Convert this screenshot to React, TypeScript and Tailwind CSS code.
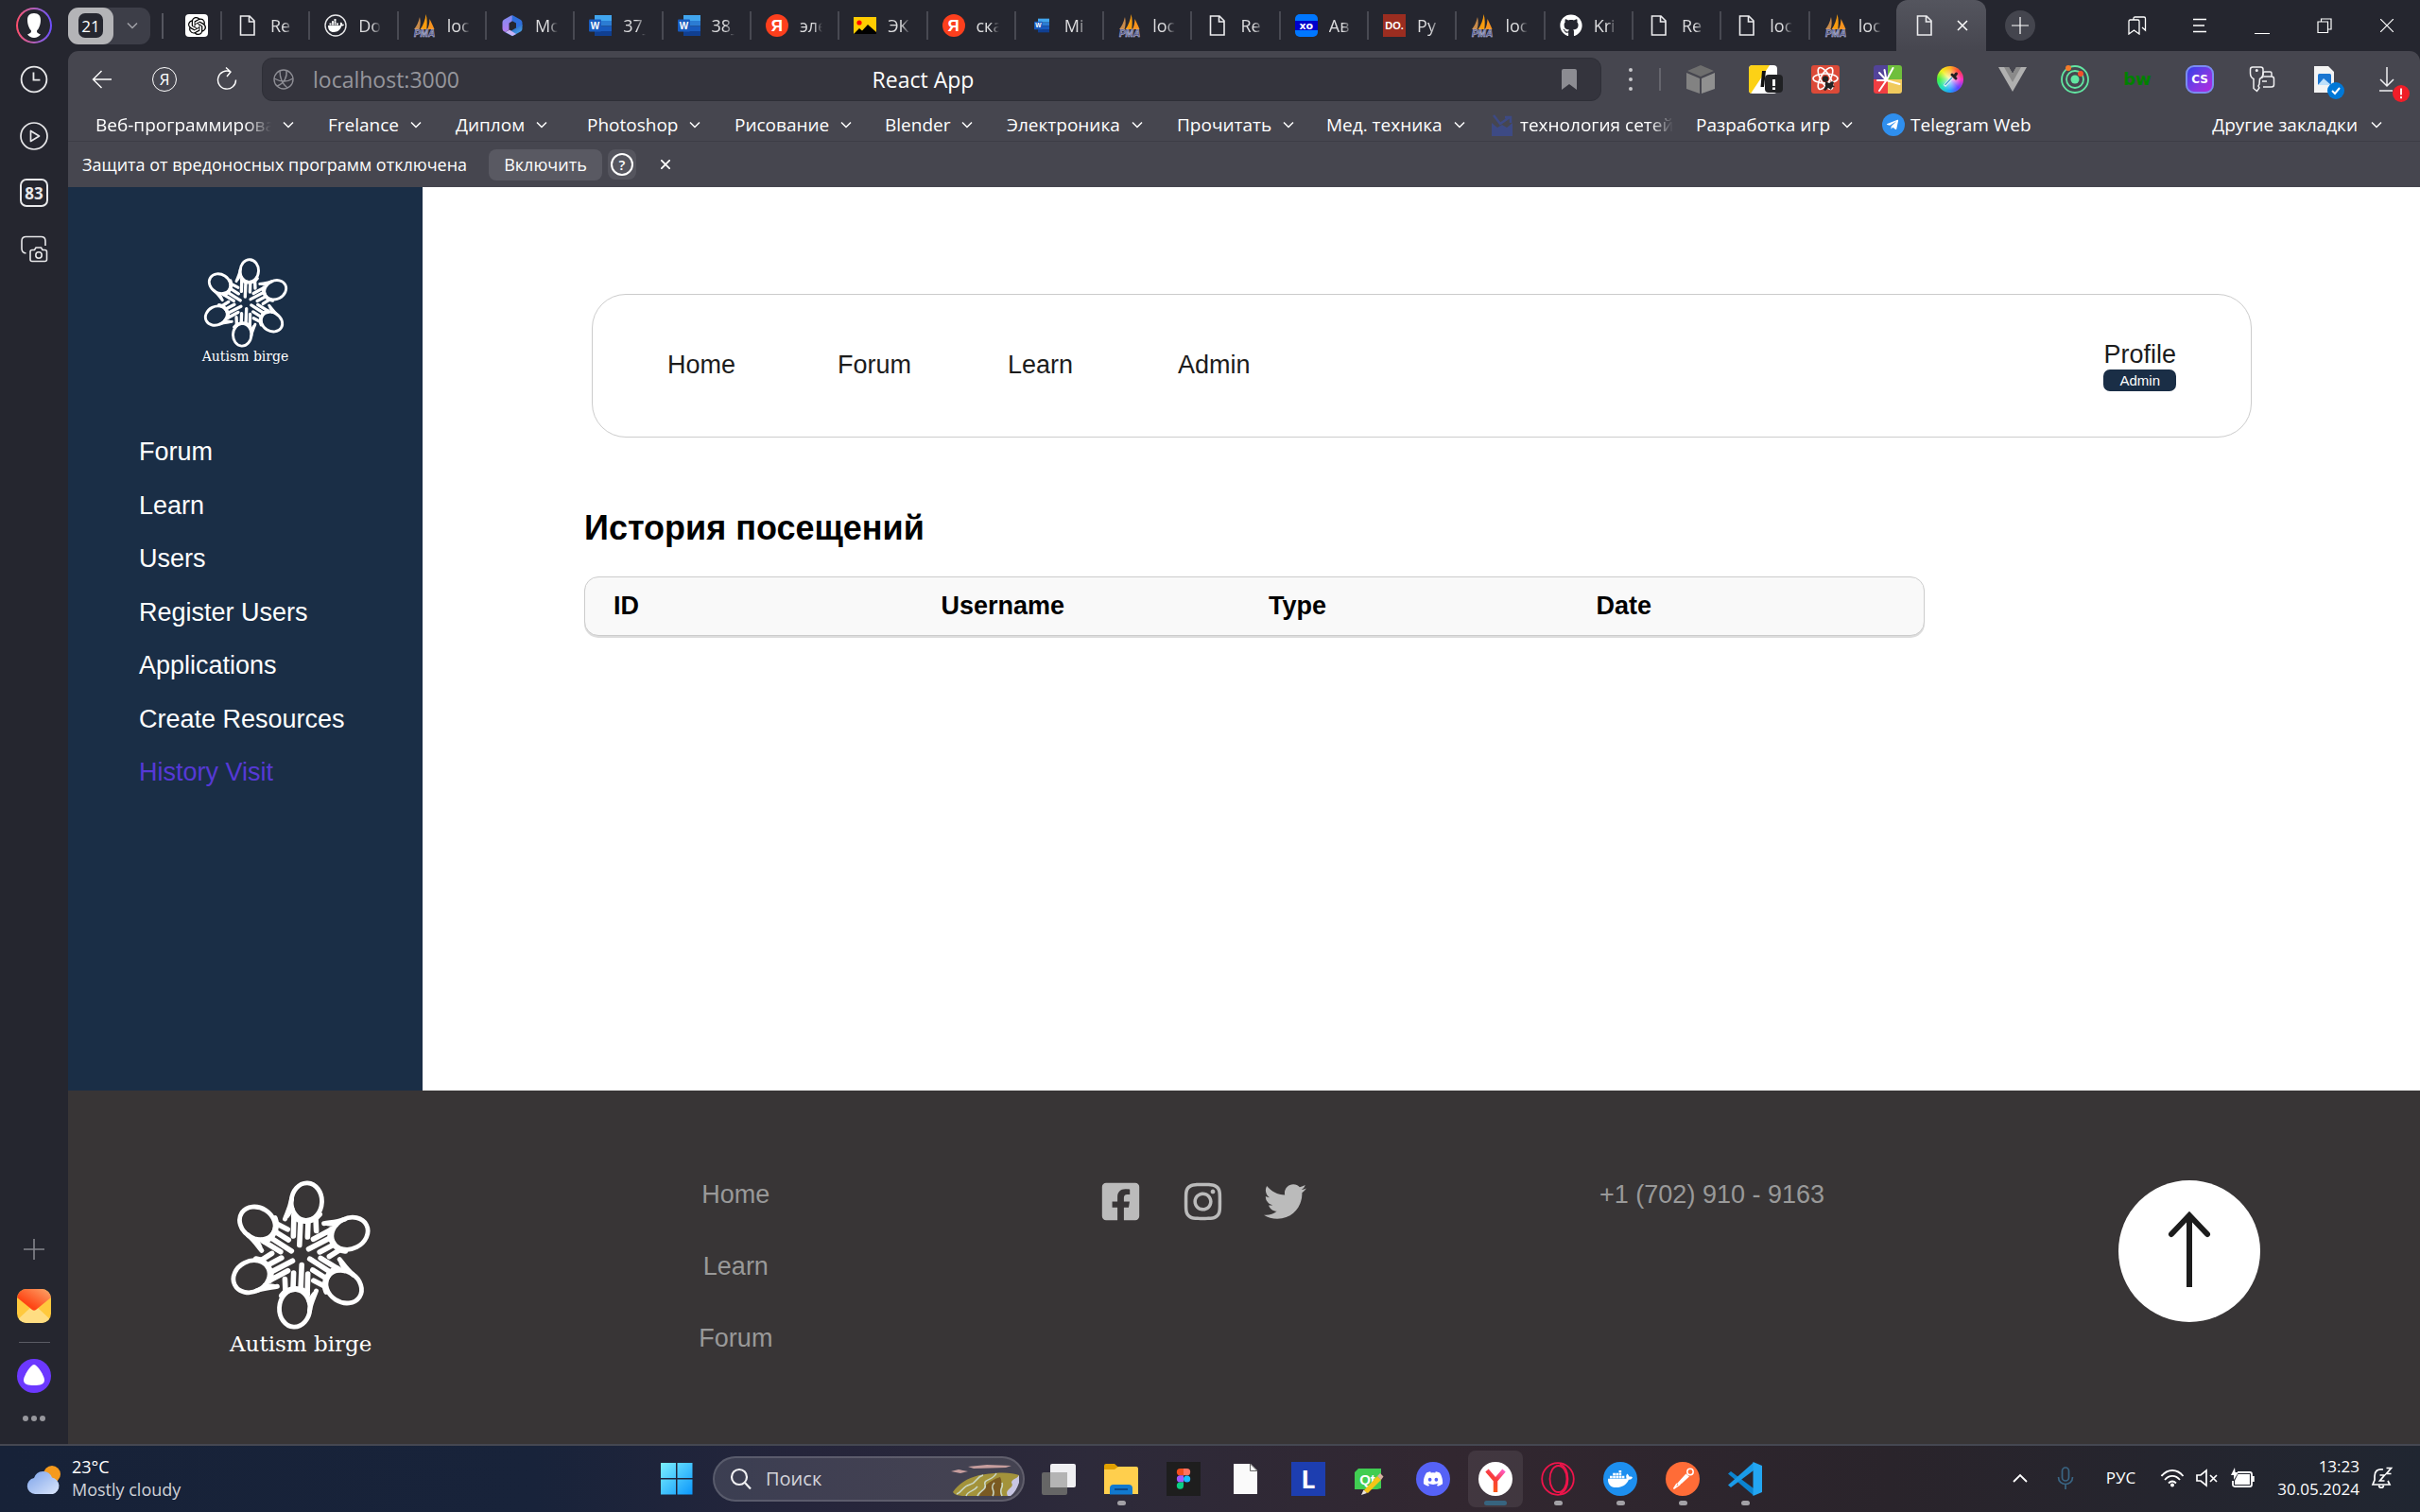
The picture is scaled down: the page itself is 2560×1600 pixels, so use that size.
import React from "react";
import {
  FaDocker,
  FaFacebookSquare,
  FaGithub,
  FaInstagram,
  FaTelegramPlane,
  FaTwitter,
  FaDiscord,
} from "react-icons/fa";
import { SiOpenai } from "react-icons/si";

/* ---------- shared pieces ---------- */

function Chevron({ className = "" }: { className?: string }) {
  return (
    <svg viewBox="0 0 12 8" className={`h-2 w-3 shrink-0 ${className}`} fill="none" stroke="currentColor" strokeWidth="1.5">
      <path d="M1 1.5 6 6.5 11 1.5" />
    </svg>
  );
}

function Hand({ angle }: { angle: number }) {
  return (
    <g transform={`rotate(${angle} 75 79)`}>
      <ellipse cx="81.3" cy="22.6" rx="16.2" ry="19.8" strokeWidth="4.8" transform="rotate(3 81.3 22.6)" />
      <path d="M65.5 20 C64 29 61 34 58.5 41" strokeWidth="5" />
      <path d="M66.5 30 61 38" strokeWidth="4" />
      <path d="M68 36 67.3 59" />
      <path d="M75 42 73.800 68.500" />
      <path d="M83 43 82.400 60" />
      <path d="M91 40 91.600 53.500" />
      <path d="M68 38 C74 45 88 45 95 36" strokeWidth="6" />
    </g>
  );
}

function Logo({ large = false }: { large?: boolean }) {
  return (
    <a href="#home" className="flex flex-col items-center text-white" aria-label="Autism birge">
      <svg viewBox="0 0 150 160" className={large ? "h-[160px] w-[150px]" : "h-24 w-[90px]"} fill="none" stroke="white" strokeWidth="5.600" strokeLinecap="round">
        {[0, 60, 120, 180, 240, 300].map((a) => (
          <Hand key={a} angle={a} />
        ))}
      </svg>
      <span
        className={
          large
            ? "whitespace-nowrap font-['DejaVu_Serif',serif] text-[23px] leading-[27px]"
            : "whitespace-nowrap font-['DejaVu_Serif',serif] text-[14px] leading-4"
        }
      >
        Autism birge
      </span>
    </a>
  );
}

/* ---------- tab icons ---------- */

const FileIcon = () => (
  <svg viewBox="0 0 24 24" className="size-6" fill="none" stroke="#ececee" strokeWidth="1.6">
    <path d="M4.5 2h9.5l5 5v15H4.5zM13.5 2v6h5.5" />
  </svg>
);
const DockerTab = () => (
  <svg viewBox="0 0 24 24" className="size-6">
    <circle cx="12" cy="12" r="11" fill="none" stroke="#e6e6e8" strokeWidth="1.4" />
    <g fill="#fff">
      <path d="M4 12h12.600c.5-1 .4-1.800.1-2.500l1.200-1c.9.7 1.200 1.500 1.200 2.200.8-.1 1.500 0 2 .3-.6 1.200-1.700 1.600-2.800 1.600C17 16.500 14.500 19 10 19c-4 0-6-2.500-6-7z" />
      <path d="M5.500 9.500h2v2h-2zM8 9.500h2v2H8zM10.500 9.500h2v2h-2zM13 9.500h2v2h-2zM8 7.200h2v2H8zM10.500 7.200h2v2h-2zM10.500 5h2v2h-2z" />
    </g>
  </svg>
);
const PmaTab = () => (
  <svg viewBox="0 0 24 24" className="size-6 overflow-visible">
    <path d="M7 3C5.500 9 3.500 13 1 16h5.500C8 12 8 7 7 3z" fill="#c98b4a" />
    <path d="M13.500 0C13 6 10.500 12 7.500 16h6.800C15 10 15 5 13.500 0z" fill="#f89c0e" />
    <path d="M17.500 5c-.2 5-1 8-2.500 11h7.500C21 12 19 8 17.500 5z" fill="#f7931e" />
    <text x="12" y="23.500" textAnchor="middle" className="font-['Liberation_Sans',sans-serif] text-[10px] font-bold italic" fill="#44487c" stroke="#c4c6e2" strokeWidth="0.5">PMA</text>
  </svg>
);
const CopilotTab = () => (
  <svg viewBox="0 0 24 24" className="size-6">
    <defs>
      <linearGradient id="m365a" x1="0" y1="0" x2="0" y2="1"><stop stopColor="#7c8cf0" /><stop offset="1" stopColor="#b67cf0" /></linearGradient>
      <linearGradient id="m365b" x1="0" y1="0" x2="1" y2="1"><stop stopColor="#0f3fae" /><stop offset="1" stopColor="#58b8f4" /></linearGradient>
    </defs>
    <path d="M11.500 1 3.500 5.500C2 6.500 1.500 7.500 1.500 9v6c0 2 .8 3 3 4l4-2.500V9.500L13 6.500z" fill="url(#m365a)" />
    <path d="m12 1 8.500 4.800C22 6.700 22.500 8 22.500 9.500v3L16 15V9.500L11.500 7z" fill="#2f6fdc" />
    <path d="M4 19l8 4.200 9-5c1.200-.9 1.500-2 1.500-3.500V11L16 14.500 10 18z" fill="url(#m365b)" />
    <path d="M4.500 19 12 23l4-2-7-4.500z" fill="#c9b4f6" />
  </svg>
);
const WordTab = ({ small = false }: { small?: boolean }) => (
  <svg viewBox="0 0 24 24" className={small ? "mx-1 size-4" : "size-6"}>
    <path d="M6 1h18v6H6z" fill="#41a5ee" />
    <path d="M6 7h18v5.500H6z" fill="#2b7cd3" />
    <path d="M6 12.500h18V18H6z" fill="#185abd" />
    <path d="M6 18h18v5H6z" fill="#103f91" />
    <rect y="5.500" width="13" height="13" rx="1" fill="#185abd" />
    <text x="6.500" y="15.500" textAnchor="middle" className="font-['Liberation_Sans',sans-serif] text-[10px] font-bold" fill="#fff">W</text>
  </svg>
);
const YaTab = () => (
  <span className="flex size-6 items-center justify-center rounded-full bg-[#fc3f1d] font-['Liberation_Sans',sans-serif] text-[17px] leading-none font-bold text-white">Я</span>
);
const PictureTab = () => (
  <svg viewBox="0 0 24 24" className="size-6">
    <path d="M0 3h24v18H0z" fill="#ffcc00" />
    <circle cx="6" cy="9" r="2.600" fill="#f00" />
    <path d="M0 21l6-6 3 2.500L15 11l9 8v2z" fill="#000" />
  </svg>
);
const XoTab = () => (
  <span className="flex size-6 items-center justify-center overflow-hidden rounded-[5px] bg-[linear-gradient(#0077ff_28%,#00c_28%,#00c_72%,#0077ff_72%)] font-['DejaVu_Sans',sans-serif] text-[11px] leading-none font-bold text-white">xo</span>
);
const DoTab = () => (
  <span className="flex size-6 items-center justify-center bg-[#9b2d20] font-['Liberation_Sans',sans-serif] text-[11px] leading-none font-bold text-white">DO.</span>
);
const GithubTab = () => <FaGithub className="size-6 text-white" />;

const tabs: { icon: () => React.ReactElement; text: string }[] = [
  { icon: FileIcon, text: "Re" },
  { icon: DockerTab, text: "Do" },
  { icon: PmaTab, text: "loc" },
  { icon: CopilotTab, text: "Mc" },
  { icon: WordTab, text: "37_" },
  { icon: WordTab, text: "38_" },
  { icon: YaTab, text: "эле" },
  { icon: PictureTab, text: "ЭК" },
  { icon: YaTab, text: "ска" },
  { icon: () => <WordTab small />, text: "Mi" },
  { icon: PmaTab, text: "loc" },
  { icon: FileIcon, text: "Re" },
  { icon: XoTab, text: "Ав" },
  { icon: DoTab, text: "Py" },
  { icon: PmaTab, text: "loc" },
  { icon: GithubTab, text: "Kri" },
  { icon: FileIcon, text: "Re" },
  { icon: FileIcon, text: "loc" },
  { icon: PmaTab, text: "loc" },
];

/* ---------- browser chrome ---------- */

function CellButton({ label, children }: { label: string; children: React.ReactNode }) {
  return (
    <button aria-label={label} className="flex w-[66px] shrink-0 items-center justify-center text-white">
      {children}
    </button>
  );
}

function TabStrip() {
  return (
    <div className="flex h-[54px] items-stretch">
      <div className="flex w-[99px] items-center">
        <button aria-label="Группы вкладок" className="flex h-[39px] w-[87px] items-center rounded-[11px] bg-[#3d3e48]">
          <span className="flex h-[39px] w-12 items-center justify-center rounded-[11px] bg-[#b4b4b7]">
            <span className="flex h-[26px] w-[26px] items-center justify-center rounded-[7px] bg-[#25262f] text-[17px] leading-none text-white">21</span>
          </span>
          <Chevron className="ml-3.5 text-[#a3a3a9]" />
        </button>
      </div>
      <div className="my-auto h-[27px] w-0.5 bg-[#55565f]" />
      <div className="flex w-[60px] items-center justify-center pl-2.5">
        <span className="flex size-6 items-center justify-center rounded bg-white text-black">
          <SiOpenai className="size-[19px]" />
        </span>
      </div>
      <div className="flex min-w-0 flex-1 items-center">
        {tabs.map((t, i) => (
          <button key={i} className="flex h-[30px] min-w-0 flex-1 items-center border-l-2 border-[#484952] pl-[15px] text-[#dcdcde]">
            <span className="flex w-6 shrink-0 justify-center"><t.icon /></span>
            <span className="ml-3 w-6 overflow-hidden text-left text-[18px] leading-6 whitespace-nowrap [mask-image:linear-gradient(to_right,#000_60%,transparent)]">
              {t.text}
            </span>
          </button>
        ))}
      </div>
      <div className="flex w-[95px] items-center rounded-t-xl bg-linear-to-b from-[#54555e] to-[#46464f] pl-[18px]">
        <FileIcon />
        <button aria-label="Закрыть вкладку" className="ml-[22px] text-white">
          <svg viewBox="0 0 12 12" className="size-3" stroke="currentColor" strokeWidth="1.5"><path d="M1 1l10 10M11 1 1 11" /></svg>
        </button>
      </div>
      <div className="flex w-[127px] items-center pl-5">
        <button aria-label="Новая вкладка" className="flex size-8 items-center justify-center rounded-full bg-[#44454e] text-white">
          <svg viewBox="0 0 18 18" className="size-[18px]" stroke="currentColor" strokeWidth="1.2"><path d="M9 0v18M0 9h18" /></svg>
        </button>
      </div>
      <CellButton label="Закладки">
        <svg viewBox="0 0 20 20" className="size-5" fill="none" stroke="currentColor" strokeWidth="1.3"><path d="M1 5.500C1 4.500 1.500 4 2.500 4h8c1 0 1.500.5 1.500 1.500V19l-5.500-4L1 19zM6 4V2.500C6 1.500 6.500 1 7.500 1h9.500c1 0 1.500.5 1.500 1.500V15l-3.500-3" /></svg>
      </CellButton>
      <CellButton label="Меню">
        <svg viewBox="0 0 16 16" className="size-4" stroke="currentColor" strokeWidth="1.3"><path d="M1 1.500h14M1 8h12M1 14.500h14" /></svg>
      </CellButton>
      <CellButton label="Свернуть">
        <span className="mt-4 h-px w-4 bg-white" />
      </CellButton>
      <CellButton label="Развернуть">
        <svg viewBox="0 0 16 16" className="size-4" fill="none" stroke="currentColor" strokeWidth="1.2"><path d="M1 4h10.500v11.500H1zM4.500 4V1H15v11h-3.500" /></svg>
      </CellButton>
      <CellButton label="Закрыть">
        <svg viewBox="0 0 14 14" className="size-3.5" stroke="currentColor" strokeWidth="1.2"><path d="M0 0l14 14M14 0 0 14" /></svg>
      </CellButton>
      <div className="w-0.5" />
    </div>
  );
}

const extensions: { label: string; icon: React.ReactElement }[] = [
  {
    label: "Куб",
    icon: (
      <svg viewBox="0 0 30 30" className="size-[30px]">
        <path d="M15 0 29 6 15 12 1 6z" fill="#6e6e6e" />
        <path d="M0 8l14 6v16L0 25z" fill="#828282" />
        <path d="M30 8l-14 6v16l14-5z" fill="#909090" />
      </svg>
    ),
  },
  {
    label: "Предупреждение",
    icon: (
      <svg viewBox="0 0 36 30" className="ml-1.5 h-[30px] w-9">
        <rect width="30" height="30" rx="4" fill="#fff" />
        <path d="M4 0h18L2 30a4 4 0 0 1-2-4V4a4 4 0 0 1 4-4z" fill="#fcd116" />
        <path d="M14 6h4l-2 17h-3.500z" fill="#111" />
        <rect x="17" y="10" width="19" height="19" rx="4" fill="#202124" />
        <path d="M26.500 15v7" stroke="#fff" strokeWidth="3" />
        <path d="M26.500 23.500v2.500" stroke="#fff" strokeWidth="3" />
      </svg>
    ),
  },
  {
    label: "React",
    icon: (
      <svg viewBox="0 0 30 30" className="size-[30px]">
        <rect width="30" height="30" rx="3" fill="#dc4a38" />
        <g fill="none" stroke="#fff" strokeWidth="1.600">
          <ellipse cx="15" cy="14" rx="13" ry="5" />
          <ellipse cx="15" cy="14" rx="13" ry="5" transform="rotate(60 15 14)" />
          <ellipse cx="15" cy="14" rx="13" ry="5" transform="rotate(120 15 14)" />
        </g>
        <circle cx="15" cy="14.500" r="3.200" fill="#222" />
        <path d="M15 17l4 2 3-2 2 1-1 3 2 2-3 .5-1 2.500-3-2-3 3-2-1 2-4z" fill="#222" />
      </svg>
    ),
  },
  {
    label: "Цвета",
    icon: (
      <svg viewBox="0 0 30 30" className="size-[30px]">
        <path d="M0 3a3 3 0 0 1 3-3h12v15H0z" fill="#524399" />
        <path d="M15 0h12a3 3 0 0 1 3 3v12H15z" fill="#6fbf3c" />
        <path d="M0 15h15v15H3a3 3 0 0 1-3-3z" fill="#ef3e42" />
        <path d="M15 15h15v12a3 3 0 0 1-3 3H15z" fill="#f0ca5d" />
        <path d="M13.500 16 6 8M13.500 16 11.500 5M13.500 16l7-13M13.500 16l14 4M13.500 16H4M13.500 16 6 27" stroke="#fff" strokeWidth="2" strokeLinecap="round" />
      </svg>
    ),
  },
  {
    label: "Пипетка",
    icon: (
      <span className="flex size-7 items-center justify-center rounded-full bg-[radial-gradient(circle,rgba(255,255,255,0.8),transparent_60%),conic-gradient(from_0deg,#ffb020,#ff4040,#ff30c0,#6040ff,#20a0ff,#20e0c0,#40f040,#f0f020,#ffb020)]">
        <svg viewBox="0 0 20 20" className="size-5"><path d="M4 17 12 8" stroke="#e8f4fb" strokeWidth="3" /><path d="M4.500 16 12 8" stroke="#40a0c8" strokeWidth="1.200" /><path d="M12 5l4 4M15 6l1.500-2" stroke="#222" strokeWidth="3" strokeLinecap="round" /></svg>
      </span>
    ),
  },
  {
    label: "Vue",
    icon: (
      <svg viewBox="0 0 30 26" className="h-[26px] w-[30px]">
        <path d="M0 0h11l4 7 4-7h11L15 26z" fill="#b0b0b0" />
        <path d="M6 0h5l4 7 4-7h5l-9 16z" fill="#8a8a8a" />
      </svg>
    ),
  },
  {
    label: "Орбита",
    icon: (
      <svg viewBox="0 0 30 30" className="size-[30px]">
        <g fill="none" stroke="#62e6a2" strokeWidth="1.800"><circle cx="15" cy="15" r="14" /><circle cx="15" cy="15" r="9" /></g>
        <circle cx="15" cy="15" r="4.500" fill="#62e6a2" />
        <circle cx="8" cy="3" r="3" fill="#f47b2a" />
        <circle cx="21" cy="9" r="3" fill="#f4502a" />
      </svg>
    ),
  },
  {
    label: "bw",
    icon: <span className="font-['DejaVu_Sans',sans-serif] text-[18px] leading-none font-bold text-[#008000]">bw</span>,
  },
  {
    label: "CS",
    icon: (
      <span className="flex size-[30px] items-center justify-center rounded-[9px] border-2 border-[#7a8cf0] bg-linear-to-br from-[#2b3de8] to-[#b41fe0] font-['DejaVu_Sans',sans-serif] text-[12px] font-bold text-white">CS</span>
    ),
  },
  {
    label: "Пароли",
    icon: (
      <svg viewBox="0 0 28 28" className="size-7" fill="none" stroke="#f0f0f2" strokeWidth="1.500">
        <path d="M5 13.500C2 12 1.500 10 1.500 7.500V3.500c0-1.500 1-2.500 2.500-2.500h8.500C14 1 15 2 15 3.500v4c0 2.500-1 4.500-3.500 6L11 19l-1 2 1 2-2.500 3.500L5 23.500z" />
        <circle cx="8.300" cy="4.500" r=".8" />
        <path d="M15 10V7.500c0-1 .6-1.500 1.500-1.500h6c1 0 1.500.5 1.500 1.500V11M13.500 13c.3-1.300 1-2 2.500-2h8c1.700 0 2.500.8 2.500 2.500v6c0 1.700-.8 2.500-2.500 2.500h-9M14 16h5" />
      </svg>
    ),
  },
  {
    label: "Снимки",
    icon: (
      <svg viewBox="0 0 36 36" className="mt-2 ml-2 size-9">
        <path d="M3 0h15l6 6v22H3z" fill="#f4f4f4" />
        <rect x="7" y="8" width="14" height="12" rx="1.500" fill="#1b76d1" />
        <path d="m7 20 6-7 8 7z" fill="#bfe0fa" />
        <circle cx="26" cy="26" r="9" fill="#0078d7" />
        <path d="m22 26 3 3 5-6" stroke="#fff" strokeWidth="2" fill="none" />
      </svg>
    ),
  },
  {
    label: "Загрузки",
    icon: (
      <svg viewBox="0 0 36 40" className="mt-3 ml-4 h-10 w-9">
        <path d="M10 1v20M3 14l7 7 7-7M2 26h14" stroke="#f0f0f2" strokeWidth="1.500" fill="none" />
        <circle cx="25" cy="29" r="9" fill="#f01d28" />
        <path d="M25 23.500v7M25 32v2.300" stroke="#fff" strokeWidth="1.800" />
      </svg>
    ),
  },
];

function Toolbar() {
  return (
    <div className="flex h-[53px] items-center pt-1.5 pl-[3px]">
      <CellButton label="Назад">
        <svg viewBox="0 0 22 20" className="h-5 w-[22px]" fill="none" stroke="currentColor" strokeWidth="1.400"><path d="M21 10H2M10.500 1 1.500 10l9 9" /></svg>
      </CellButton>
      <CellButton label="Яндекс">
        <span className="flex size-[26px] items-center justify-center rounded-full border border-white text-[17px] leading-none">Я</span>
      </CellButton>
      <CellButton label="Обновить">
        <svg viewBox="0 0 24 26" className="h-[26px] w-6" fill="none" stroke="currentColor" strokeWidth="1.400"><path d="M16 5A9.500 9.500 0 1 0 21.500 13.500M11 0.500l5 4.500-4 5" /></svg>
      </CellButton>
      <div className="ml-1 flex h-[46px] min-w-0 flex-1 items-center rounded-[11px] border border-[#2e2f37] bg-[#34343d]">
        <div className="flex flex-1 items-center gap-2 pl-[7px]">
          <button aria-label="О сайте" className="flex h-9 w-[30px] items-center justify-center rounded-lg text-[#8d8d94]">
            <svg viewBox="0 0 22 22" className="size-[22px]" fill="none" stroke="currentColor" strokeWidth="1.400"><circle cx="11" cy="11" r="10" /><path d="M7 2c0 8 3 14 8 18M14 1.500C15 8 12 15 4 18M1 10c7 4 14 4 20 0" /></svg>
          </button>
          <input aria-label="Адрес" defaultValue="localhost:3000" className="w-[200px] bg-transparent pl-2 text-[23px] leading-[34px] text-[#96969c] outline-none" />
        </div>
        <span className="text-[23px] leading-[34px] text-white">React App</span>
        <div className="flex flex-1 justify-end pr-[25px]">
          <button aria-label="Добавить в закладки" className="text-[#8c8c92]">
            <svg viewBox="0 0 16 22" className="h-[22px] w-4" fill="currentColor"><path d="M2 0h12a2 2 0 0 1 2 2v20l-8-6-8 6V2a2 2 0 0 1 2-2z" /></svg>
          </button>
        </div>
      </div>
      <button aria-label="Ещё" className="flex w-[61px] flex-col items-center gap-1.5">
        <span className="size-1 rounded-full bg-[#c8c8cb]" />
        <span className="size-1 rounded-full bg-[#c8c8cb]" />
        <span className="size-1 rounded-full bg-[#c8c8cb]" />
      </button>
      <div className="mr-[9px] h-6 w-0.5 bg-[#65656d]" />
      {extensions.map((e) => (
        <CellButton key={e.label} label={e.label}>{e.icon}</CellButton>
      ))}
      <div className="w-0.5" />
    </div>
  );
}

const folders: { text: string; w: string; kind: string }[] = [
  { text: "Веб-программирова", w: "w-[246px]", kind: "cut" },
  { text: "Frelance", w: "w-[135px]", kind: "folder" },
  { text: "Диплом", w: "w-[139px]", kind: "folder" },
  { text: "Photoshop", w: "w-[156px]", kind: "folder" },
  { text: "Рисование", w: "w-[159px]", kind: "folder" },
  { text: "Blender", w: "w-[129px]", kind: "folder" },
  { text: "Электроника", w: "w-[180px]", kind: "folder" },
  { text: "Прочитать", w: "w-[158px]", kind: "folder" },
  { text: "Мед. техника", w: "w-[175px]", kind: "folder" },
  { text: "технология сетей", w: "w-[216px]", kind: "site" },
  { text: "Разработка игр", w: "w-[197px]", kind: "folder" },
  { text: "Telegram Web", w: "w-[170px]", kind: "telegram" },
];

function BookmarksBar() {
  return (
    <div className="flex h-[43px] items-center border-b border-[#3d3d46] pt-2 pr-10 pl-[29px] text-[19px] leading-6 text-white">
      {folders.map((f) => (
        <a href="#bookmark" key={f.text} className={`${f.w} flex shrink-0 items-center whitespace-nowrap`}>
          {f.kind === "site" && (
            <svg viewBox="0 0 24 24" className="mr-1.5 size-6 shrink-0"><path d="M0 24V10l6 5 5-3 5 3 6-5v14z" fill="#3d4a84" /><path d="M2 2l7 9 10-7M14 4h6v6" fill="none" stroke="#3d4a84" strokeWidth="2.500" /></svg>
          )}
          {f.kind === "telegram" && (
            <span className="mr-1.5 flex size-6 shrink-0 items-center justify-center rounded-full bg-[#2f8fee]">
              <FaTelegramPlane className="mr-0.5 size-3.5" />
            </span>
          )}
          <span
            className={
              f.kind === "cut"
                ? "w-[186px] overflow-hidden [mask-image:linear-gradient(to_right,#000_85%,transparent)]"
                : f.kind === "site"
                  ? "w-[162px] overflow-hidden [mask-image:linear-gradient(to_right,#000_85%,transparent)]"
                  : ""
            }
          >
            {f.text}
          </span>
          {(f.kind === "folder" || f.kind === "cut") && <Chevron className="ml-3" />}
        </a>
      ))}
      <a href="#other" className="ml-auto flex items-center whitespace-nowrap">
        Другие закладки <Chevron className="ml-3.5" />
      </a>
    </div>
  );
}

function NoticeBar() {
  return (
    <div className="flex h-12 items-center pl-[15px] text-[18px] leading-6 text-white">
      <span className="min-w-[418px]">Защита от вредоносных программ отключена</span>
      <button className="ml-3 h-[33px] w-[120px] rounded-lg bg-[#595962]">Включить</button>
      <button aria-label="Справка" className="ml-1.5 flex h-8 w-[30px] items-center justify-center rounded-lg bg-[#55555e]">
        <span className="flex size-6 items-center justify-center rounded-full border-2 border-white text-[15px] leading-none font-semibold">?</span>
      </button>
      <button aria-label="Скрыть" className="ml-[26px]">
        <svg viewBox="0 0 10 10" className="size-2.5" stroke="currentColor" strokeWidth="1.800"><path d="M0 0l10 10M10 0 0 10" /></svg>
      </button>
    </div>
  );
}

function Rail() {
  return (
    <aside className="flex w-[72px] shrink-0 flex-col items-center bg-[#25262f] text-[#e8e8ea]">
      <button aria-label="Профиль" className="mt-2 flex size-[38px] items-center justify-center rounded-full bg-linear-to-r from-[#ff4c68] to-[#6a4cff]">
        <span className="flex size-[34px] items-center justify-center rounded-full bg-[#25262f]">
          <svg viewBox="0 0 28 28" className="size-7" fill="#fff"><path d="M14 1c5 0 7 3 7 7 0 3-.5 5-1.500 7.500-.5 2-2 3-2.500 4 0 2 .5 2.500 4 4C19 25.500 17 27 14 27s-5-1.500-7-3.500c3.500-1.500 4-2 4-4-.5-1-2-2-2.500-4C7.500 13 7 11 7 8c0-4 2-7 7-7z" /></svg>
        </span>
      </button>
      <button aria-label="История" className="mt-[23px] h-[30px]">
        <svg viewBox="0 0 28 28" className="size-[30px]" fill="none" stroke="currentColor" strokeWidth="1.700"><circle cx="14" cy="14" r="12.500" /><path d="M13.500 7v7.500h6.500" /></svg>
      </button>
      <button aria-label="Видео" className="mt-[30px] h-[30px]">
        <svg viewBox="0 0 30 30" className="size-[30px]" fill="none" stroke="currentColor" strokeWidth="1.700"><circle cx="15" cy="15" r="14" /><path d="M11.500 9.500v11l9-5.500z" strokeLinejoin="round" /></svg>
      </button>
      <button aria-label="Вкладки" className="mt-[30px] flex size-[30px] items-center justify-center rounded-[7px] border-2 border-[#e8e8ea] text-[17px] leading-none font-bold">83</button>
      <button aria-label="Скриншот" className="mt-[30px] h-[30px]">
        <svg viewBox="0 0 30 30" className="size-[30px]" fill="none" stroke="currentColor" strokeWidth="1.600"><path d="M6.500 19C3 18.500 2 17 2 14V6c0-3 1.500-4.500 4.500-4.500h16C25.500 1.500 27 3 27 6v5" /><path d="M11 17.500c0-1.500.7-2 2-2h2.500l1.500-2.500h5.500l1.500 2.500h2.500c1.300 0 2 .5 2 2v8c0 1.300-.7 2-2 2H13c-1.300 0-2-.7-2-2z" /><circle cx="20" cy="21" r="3.200" /></svg>
      </button>
      <div className="mt-auto flex flex-col items-center pb-6">
        <button aria-label="Добавить" className="text-[#85868d]">
          <svg viewBox="0 0 22 22" className="size-[22px]" stroke="currentColor" strokeWidth="1.600"><path d="M11 0v22M0 11h22" /></svg>
        </button>
        <button aria-label="Почта" className="mt-[31px]">
          <svg viewBox="0 0 36 36" className="size-9">
            <defs>
              <clipPath id="mailc"><rect width="36" height="36" rx="10" /></clipPath>
              <linearGradient id="mailg" x1="0" y1="1" x2="1" y2="0"><stop offset=".3" stopColor="#fe4414" /><stop offset="1" stopColor="#fda86b" /></linearGradient>
            </defs>
            <g clipPath="url(#mailc)">
              <rect width="36" height="36" fill="#ffc93d" />
              <path d="M0 36V33L14 20h8l14 13v3z" fill="#ffdd82" />
              <path d="M0 0h36v9L20 22c-1.300 1-2.700 1-4 0L0 9z" fill="url(#mailg)" />
            </g>
          </svg>
        </button>
        <div className="mt-5 h-px w-[33px] bg-[#5a5b64]" />
        <button aria-label="Алиса" className="mt-[17px]">
          <svg viewBox="0 0 36 36" className="size-9"><circle cx="18" cy="18" r="18" fill="#6c38ff" /><path d="M18 6c3.500 0 11 12 11 16.500S24 28 18 28 7 27 7 22.500 14.500 6 18 6z" fill="#fff" /></svg>
        </button>
        <button aria-label="Другие" className="mt-6 flex gap-[3px]">
          <span className="size-1.5 rounded-full bg-[#97979d]" />
          <span className="size-1.5 rounded-full bg-[#97979d]" />
          <span className="size-1.5 rounded-full bg-[#97979d]" />
        </button>
      </div>
    </aside>
  );
}

/* ---------- web page ---------- */

const sideLinks = ["Forum", "Learn", "Users", "Register Users", "Applications", "Create Resources", "History Visit"];

function Page() {
  return (
    <div className="flex flex-1 flex-col bg-white font-['Liberation_Sans',Arial,sans-serif] text-[27px] leading-[30px] text-[#1c1c1c]">
      <div className="flex flex-1">
        <aside className="w-[375px] shrink-0 bg-[#1a2e46] pt-[75px]">
          <Logo />
          <ul className="mt-[78px] ml-[75px] flex h-[369px] flex-col justify-between text-white">
            {sideLinks.map((l) => (
              <li key={l}>
                <a href="#section" className={l === "History Visit" ? "text-[#5639d6]" : ""}>{l}</a>
              </li>
            ))}
          </ul>
        </aside>
        <main className="min-w-0 flex-1 pt-[113px]">
          <nav className="mr-[178px] ml-[179px] flex h-[152px] items-center justify-between rounded-[36px] border border-[#ccc] px-[79px] pb-0.5">
            <ul className="flex">
              {["Home", "Forum", "Learn", "Admin"].map((l) => (
                <li key={l} className="w-[180px]"><a href="#page">{l}</a></li>
              ))}
            </ul>
            <a href="#profile" className="flex flex-col">
              <span className="leading-8">Profile</span>
              <span className="rounded-[7px] bg-[#1a2e46] text-center text-[15px] leading-[23px] text-white">Admin</span>
            </a>
          </nav>
          <section className="ml-[171px]">
            <h1 className="mt-[75px] text-[36px] leading-[42px] font-bold text-black">История посещений</h1>
            <table className="mt-[30px] w-full max-w-[1418px] table-fixed border-separate border-spacing-0 rounded-[15px] border border-[#ccc] bg-[#f9f9f9] pl-[30px] text-black shadow-[0_2px_0_#ddd]">
              <thead>
                <tr>
                  {["ID", "Username", "Type", "Date"].map((h) => (
                    <th key={h} scope="col" className="h-[61px] pb-0.5 text-left font-bold">{h}</th>
                  ))}
                </tr>
              </thead>
            </table>
          </section>
        </main>
      </div>
      <footer className="flex h-[374px] items-start justify-between bg-[#383536] pt-[95px] pr-[169px] pl-[171px] text-[#999]">
        <div className="flex gap-[346px]">
          <Logo large />
          <ul className="flex flex-col gap-[46px] text-center">
            {["Home", "Learn", "Forum"].map((l) => (
              <li key={l}><a href="#page">{l}</a></li>
            ))}
          </ul>
          <div className="flex gap-[42px] text-[#bbb]">
            <a href="#facebook" aria-label="Facebook"><FaFacebookSquare className="size-[45px]" /></a>
            <a href="#instagram" aria-label="Instagram"><FaInstagram className="size-[45px]" /></a>
            <a href="#twitter" aria-label="Twitter"><FaTwitter className="size-[45px]" /></a>
          </div>
        </div>
        <div className="flex gap-[311px]">
          <a href="tel:+17029109163" className="whitespace-nowrap">+1 (702) 910 - 9163</a>
          <button aria-label="Наверх" className="flex size-[150px] items-center justify-center rounded-full bg-white">
            <svg viewBox="0 0 150 150" className="size-[150px]" fill="none" stroke="#1c1c1c" strokeWidth="6">
              <path d="M75 38v75" /><path d="M56 57 75 37l19 20" strokeLinecap="round" />
            </svg>
          </button>
        </div>
      </footer>
    </div>
  );
}

/* ---------- taskbar ---------- */

const FigmaIcon = () => (
  <svg viewBox="0 0 36 36" className="size-9">
    <rect width="36" height="36" fill="#1e1e1e" />
    <path d="M14.500 7H18v7.300h-3.500a3.600 3.600 0 0 1 0-7.300z" fill="#f24e1e" />
    <path d="M18 7h3.500a3.600 3.600 0 0 1 0 7.300H18z" fill="#ff7262" />
    <path d="M14.500 14.300H18v7.300h-3.500a3.600 3.600 0 0 1 0-7.300z" fill="#a259ff" />
    <circle cx="21.600" cy="18" r="3.600" fill="#1abcfe" />
    <path d="M14.500 21.600H18v3.700a3.600 3.600 0 1 1-3.500-3.700z" fill="#0acf83" />
  </svg>
);

const apps: { name: string; running?: boolean; active?: boolean; icon: React.ReactElement }[] = [
  {
    name: "Представление задач",
    icon: (
      <svg viewBox="0 0 36 36" className="size-9"><rect x="9" y="2" width="27" height="25" rx="2" fill="#f0f0f2" /><rect x="0" y="11" width="27" height="24" rx="2" fill="#666" /><path d="M9 11h18v16H9z" fill="#b4b4b4" /></svg>
    ),
  },
  {
    name: "Проводник",
    running: true,
    icon: (
      <svg viewBox="0 0 36 36" className="size-9">
        <path d="M0 4a2 2 0 0 1 2-2h9l4 3.500v4H0z" fill="#e0a000" />
        <path d="M0 8h11l4-3h19a2 2 0 0 1 2 2v27H0z" fill="#ffcf4d" />
        <path d="M6 34.500V28a4 4 0 0 1 4-4h16a4 4 0 0 1 4 4v6.500z" fill="#1179cf" />
        <path d="M11 29h14" stroke="#0a4a8c" strokeWidth="2" />
      </svg>
    ),
  },
  { name: "Figma", icon: <FigmaIcon /> },
  {
    name: "Документ",
    icon: <svg viewBox="0 0 36 36" className="size-9"><path d="M5 2h18l7 7v25H5z" fill="#fafafa" /><path d="M22.500 2v7.500H30z" fill="#fff" stroke="#666" strokeWidth="1" /></svg>,
  },
  {
    name: "L",
    icon: <span className="flex size-9 items-center justify-center bg-[#1d3eb0] text-[27px] leading-none font-bold text-white">L</span>,
  },
  {
    name: "Qt",
    icon: (
      <svg viewBox="0 0 36 36" className="size-9">
        <path d="M5 7h24v21l-4 1H1V11z" fill="#41cd52" />
        <text x="14.500" y="23.500" textAnchor="middle" className="font-['Liberation_Sans',sans-serif] text-[15px] font-bold" fill="#fff">Qt</text>
        <path d="M10 31 25 15l4 4L15 33z" fill="#f5c518" />
        <path d="m25 15 3-3 3.500 3.500L29 19z" fill="#d8b0a0" />
        <path d="m8 35 2.500-5.500 3.500 3.500z" fill="#e8e0d8" />
      </svg>
    ),
  },
  {
    name: "Discord",
    icon: <span className="flex size-9 items-center justify-center rounded-full bg-[#5662f6] text-white"><FaDiscord className="size-[22px]" /></span>,
  },
  {
    name: "Яндекс Браузер",
    active: true,
    icon: (
      <svg viewBox="0 0 36 36" className="size-9">
        <defs><linearGradient id="yag" x1="1" y1="0" x2=".4" y2="1"><stop stopColor="#ff5cc8" /><stop offset=".5" stopColor="#f83c3c" /><stop offset="1" stopColor="#fc5a14" /></linearGradient></defs>
        <circle cx="18" cy="18" r="18" fill="#fff" />
        <path d="M9 9l9 10.500V32M27 9l-9 10.500" fill="none" stroke="url(#yag)" strokeWidth="4.500" strokeLinejoin="round" />
      </svg>
    ),
  },
  {
    name: "Opera",
    running: true,
    icon: (
      <svg viewBox="0 0 36 36" className="size-9" fill="none" stroke="#f0144b" strokeWidth="1.800"><circle cx="18" cy="18" r="16.800" /><ellipse cx="18.500" cy="18" rx="9" ry="14" /><path d="M20 2.500C26 4 28.500 11 28.500 18s-2.500 14-8.500 15.500" /></svg>
    ),
  },
  {
    name: "Docker",
    running: true,
    icon: <span className="flex size-9 items-center justify-center rounded-full bg-[#1d8fef] text-white"><FaDocker className="size-[26px]" /></span>,
  },
  {
    name: "Postman",
    running: true,
    icon: (
      <svg viewBox="0 0 36 36" className="size-9"><circle cx="18" cy="18" r="18" fill="#ff6c37" /><circle cx="26" cy="10.500" r="3.200" fill="none" stroke="#fff" strokeWidth="1.500" /><path d="m12 23 9.500-10.500 3.500 3L14.500 25z" fill="#fff" /><path d="M12 23l-3.500 5.500L15 24" stroke="#fff" strokeWidth="1.500" fill="none" /></svg>
    ),
  },
  {
    name: "VS Code",
    running: true,
    icon: (
      <svg viewBox="0 0 36 36" className="size-9"><path d="M0 12.500 3 10l24 18v7.500z" fill="#0b84d0" /><path d="M0 24.500 3 27 27 9V.5z" fill="#1a9be8" /><path d="M26.500 0 36 4v28l-9.500 4z" fill="#23a6f2" /></svg>
    ),
  },
];

function Taskbar() {
  return (
    <footer className="flex h-[72px] items-center border-t-2 border-[#454751] bg-[linear-gradient(to_right,#172238,#18233a_22%,#25253b_33%,#2d2a3a_45%,#322730_60%,#2a242b_78%,#202631)] text-[18px] text-white">
      <div className="flex flex-1 items-center pb-0.5 pl-7">
        <svg viewBox="0 0 38 32" className="mt-1 h-8 w-[38px]">
          <defs><linearGradient id="cl" x1="0" y1="0" x2="1" y2="1"><stop stopColor="#7ba2ea" /><stop offset="1" stopColor="#dbe6fb" /></linearGradient></defs>
          <circle cx="27" cy="10" r="9" fill="#f59a1c" />
          <path d="M9 31a8.500 8.500 0 0 1-1-16.900 10 10 0 0 1 19-.6A9 9 0 0 1 28 31z" fill="url(#cl)" />
        </svg>
        <div className="ml-2.5 text-[18px] leading-6">
          <div>23°C</div>
          <div className="text-[#d0d2d8]">Mostly cloudy</div>
        </div>
      </div>
      <div className="flex items-center pb-px pl-0.5">
        <button aria-label="Пуск" className="flex w-[66px] justify-center">
          <svg viewBox="0 0 36 36" className="size-9">
            <defs><linearGradient id="win" x1="0" y1="0" x2="1" y2="1"><stop stopColor="#7cf0ff" /><stop offset="1" stopColor="#0b97fb" /></linearGradient></defs>
            <path d="M1 1h16v16H1zM18.500 1h16v16h-16zM1 18.500h16v16H1zM18.500 18.500h16v16h-16z" fill="url(#win)" />
          </svg>
        </button>
        <label className="ml-[5px] flex h-12 w-[330px] items-center overflow-hidden rounded-full border-2 border-white/15 bg-white/12 pl-4">
          <svg viewBox="0 0 24 24" className="size-6 shrink-0" fill="none" stroke="#f0f0f2" strokeWidth="2.200"><circle cx="10" cy="10" r="8" /><path d="m16 16 6 6.500" /></svg>
          <input aria-label="Поиск" placeholder="Поиск" className="ml-3.5 w-[140px] bg-transparent text-[20px] leading-7 outline-none placeholder:text-[#d4d4da]" />
          <svg viewBox="0 0 76 40" className="ml-auto h-10 w-[76px] shrink-0">
            <path d="M0 12l8-2 10 2-8 2zM18 7l20-2 26 1-6 2-34 1z" fill="#c79e9e" />
            <path d="M2 34C10 22 24 15 46 14c12-1 20 0 26 2l-1 9c-2 6-5 10-9 13H14c-6 0-10-1-12-4z" fill="#a3933b" />
            <path d="M30 38c4-10 10-16 22-20 4 8-2 12 2 20z" fill="#7a5a22" />
            <path d="M6 36c6-2 6-8 14-10s6-8 14-10M16 38c2-6 8-4 12-10M28 38c2-6 10-6 8-12s8-4 12-12M44 38c4-6-4-8 2-14M54 38c-4-8 2-8 0-14" fill="none" stroke="#c9d6c4" strokeWidth="1.600" />
            <path d="M60 38c-4-8 8-8 4-14 0-4 6-4 8-8v8c-2 6-5 11-9 14z" fill="#c8c6e2" />
          </svg>
        </label>
        <div className="ml-[3px] flex">
          {apps.map((a) => (
            <button key={a.name} aria-label={a.name} className="flex w-[66px] justify-center">
              <span className={a.active ? "relative flex h-[60px] w-[58px] items-center justify-center rounded-lg bg-white/8" : "relative flex h-[60px] w-[58px] items-center justify-center"}>
                {a.icon}
                {a.active && <span className="absolute bottom-0.5 left-[17px] h-[5px] w-6 rounded-full bg-[#37647f]" />}
                {a.running && <span className="absolute bottom-0.5 left-[25px] h-[5px] w-[9px] rounded-full bg-[#a3a1a6]" />}
              </span>
            </button>
          ))}
        </div>
      </div>
      <div className="flex flex-1 items-center justify-end pr-7 pb-0.5">
        <button aria-label="Скрытые значки">
          <svg viewBox="0 0 16 10" className="h-2.5 w-4" fill="none" stroke="currentColor" strokeWidth="1.800"><path d="m1 9 7-7 7 7" /></svg>
        </button>
        <svg viewBox="0 0 18 24" className="ml-[31px] h-6 w-[18px]" fill="none" stroke="#3a6584" strokeWidth="1.700"><rect x="5.500" y="1" width="7" height="14" rx="3.500" /><path d="M1.500 11c0 10 15 10 15 0M9 18.500V24" /></svg>
        <span className="ml-[34px] text-[17px] leading-6">РУС</span>
        <button aria-label="Сеть, звук, батарея" className="ml-[26px] flex items-center gap-3">
          <svg viewBox="0 0 26 20" className="h-5 w-[26px]" fill="none" stroke="currentColor" strokeWidth="1.800"><path d="M1.500 8C8 0 18 0 24.500 8M5 12c4.500-5.500 11.500-5.500 16 0M9 15.500c2.500-2.500 5.500-2.500 8 0" /><circle cx="13" cy="17.500" r="2" fill="currentColor" stroke="none" /></svg>
          <svg viewBox="0 0 24 20" className="h-5 w-6" fill="none" stroke="currentColor" strokeWidth="1.700"><path d="M1 7v6h4l6 5V2L5 7zM15 7l7 7M22 7l-7 7" /></svg>
          <svg viewBox="0 0 26 22" className="h-[22px] w-[26px]" fill="none" stroke="currentColor" strokeWidth="1.800"><path d="M8 5h13c1.300 0 2 .7 2 2v11c0 1.300-.7 2-2 2H5c-1.300 0-2-.7-2-2v-4" /><path d="M9 8h11v9H6v-3z" fill="currentColor" /><path d="M24.500 9v6" strokeWidth="2.500" /><path d="M5 0 1 8h3v5l5-8H5.500z" fill="currentColor" stroke="none" /></svg>
        </button>
        <div className="ml-6 text-right text-[17px] leading-6">
          <div>13:23</div>
          <div>30.05.2024</div>
        </div>
        <button aria-label="Уведомления" className="ml-3">
          <svg viewBox="0 0 24 24" className="size-6" fill="none" stroke="currentColor" strokeWidth="1.700"><path d="M13 3C7 2 4 5 4 10v4l-2 5h18l-2-4M8.500 20c.5 3 4.500 3 5 0M9.500 9h5l-5 6h5M16.500 1.500h5l-5 6h5" /></svg>
        </button>
      </div>
    </footer>
  );
}

export default function App() {
  return (
    <div className="flex min-h-screen flex-col bg-[#25262f] font-['Open_Sans','Noto_Sans',sans-serif]">
      <div className="flex flex-1">
        <Rail />
        <div className="flex min-w-0 flex-1 flex-col">
          <TabStrip />
          <header className="rounded-t-[11px] bg-[#46464f]">
            <Toolbar />
            <BookmarksBar />
            <NoticeBar />
          </header>
          <Page />
        </div>
      </div>
      <Taskbar />
    </div>
  );
}
